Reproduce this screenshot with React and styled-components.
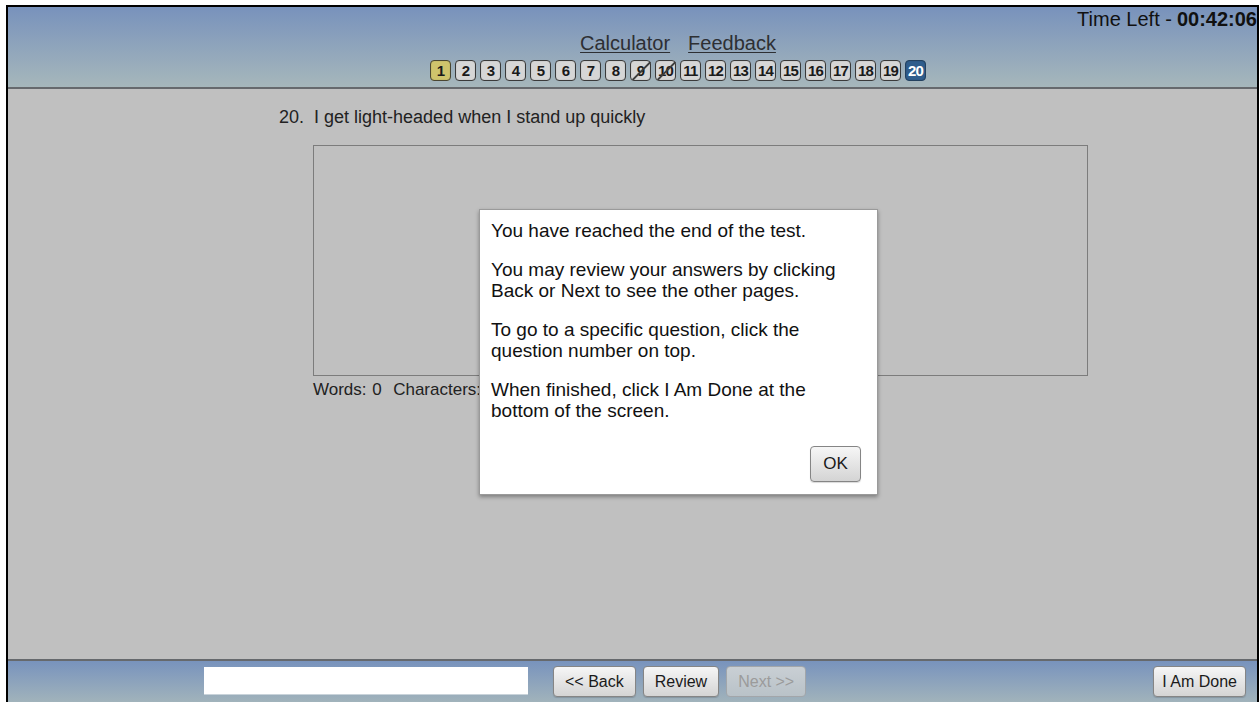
import React from "react";
import styled, { createGlobalStyle, css } from "styled-components";

const GlobalStyle = createGlobalStyle`
  html, body {
    margin: 0;
    padding: 0;
    background: #ffffff;
    overflow: hidden;
  }
  body {
    font-family: "Liberation Sans", Arial, sans-serif;
    color: #1c1c1c;
  }
`;

const Frame = styled.div`
  margin: 5px 1px 0 6px;
  height: 697px;
  border: 2px solid #000;
  border-bottom: none;
  display: flex;
  flex-direction: column;
  position: relative;
  box-sizing: border-box;
`;

const Header = styled.header`
  height: 80px;
  flex: none;
  background: linear-gradient(#7892bc, #a6b7bb);
  border-bottom: 2px solid #66696d;
  display: flex;
  flex-direction: column;
`;

const TimeRow = styled.div`
  display: flex;
  justify-content: flex-end;
  font-size: 20px;
  line-height: 24px;
  height: 23px;
  color: #111;
  b {
    font-weight: bold;
    margin-left: 5px;
  }
`;

const Center = styled.div`
  padding-left: 91px;
  display: flex;
  flex-direction: column;
  align-items: center;
`;

const Links = styled.div`
  display: flex;
  gap: 18px;
  font-size: 20px;
  line-height: 24px;
  margin-top: 1px;
  a {
    color: #2d2f33;
    text-decoration: underline;
    text-underline-offset: 2px;
    text-decoration-thickness: 1px;
  }
`;

const Numbers = styled.div`
  display: flex;
  gap: 4px;
  margin-top: 5px;
`;

const NumBox = styled.span`
  position: relative;
  width: 19px;
  height: 19px;
  border: 1px solid #3a3a3a;
  border-radius: 4px;
  background: #d6d6d6;
  box-shadow: inset 0 0 1px rgba(0, 0, 0, 0.35);
  display: flex;
  align-items: center;
  justify-content: center;
  font-size: 15px;
  font-weight: bold;
  letter-spacing: -0.8px;
  color: #1a1a1a;

  ${(p) =>
    p.$state === "current" &&
    css`
      background: #cfc46c;
      border-color: #4a4632;
    `}

  ${(p) =>
    p.$state === "active" &&
    css`
      background: #2f5d8c;
      border-color: #23415f;
      color: #fff;
    `}

  ${(p) =>
    p.$struck &&
    css`
      &::after {
        content: "";
        position: absolute;
        left: -2px;
        top: 9px;
        width: 25px;
        height: 2px;
        background: #3c3c3c;
        transform: rotate(-45deg);
      }
    `}
`;

const Content = styled.main`
  flex: 1;
  background: #c0c0c0;
  border-bottom: 2px solid #66696d;
  padding: 17px 0 0 271px;
  position: relative;
`;

const Question = styled.div`
  font-size: 18px;
  line-height: 22px;
  color: #222;
  display: flex;
  gap: 10px;
`;

const AnswerBox = styled.div`
  margin: 17px 0 0 34px;
  width: 773px;
  height: 229px;
  border: 1px solid #7c7c7c;
`;

const Counter = styled.div`
  margin: 3px 0 0 34px;
  font-size: 17px;
  line-height: 22px;
  color: #222;
  word-spacing: 1px;
`;

const Footer = styled.footer`
  height: 41px;
  flex: none;
  background: linear-gradient(#7893bd, #a1b3bb);
  display: flex;
  align-items: flex-start;
  padding: 5px 11px 0 196px;
  box-sizing: border-box;
`;

const Blank = styled.div`
  width: 324px;
  height: 27px;
  margin-top: 1px;
  background: #fff;
  border-bottom: 1px solid #c9d3da;
  margin-right: 25px;
`;

const NavGroup = styled.div`
  display: flex;
  gap: 7px;
`;

const Button = styled.button`
  font-family: "Liberation Sans", Arial, sans-serif;
  font-size: 16px;
  height: 31px;
  padding: 0 11px;
  white-space: nowrap;
  border: 1px solid #858585;
  border-radius: 4px;
  background: linear-gradient(#f6f6f6, #d4d4d4);
  color: #1a1a1a;
  box-shadow: 0 1px 1px rgba(0, 0, 0, 0.15);
  cursor: pointer;

  &:disabled {
    color: #9b9b9b;
    border-color: #a2a6aa;
    background: linear-gradient(#c9cfd4, #b9c2c8);
    box-shadow: none;
    cursor: default;
  }
`;

const DoneButton = styled(Button)`
  margin-left: auto;
  padding: 0 8px;
`;

const Dialog = styled.div`
  position: absolute;
  left: 471px;
  top: 202px;
  width: 374px;
  height: 262px;
  padding: 10px 12px 12px 11px;
  background: #fff;
  border: 1px solid #9a9a9a;
  box-shadow: 0 2px 4px rgba(0, 0, 0, 0.35);
  display: flex;
  flex-direction: column;
  font-size: 19px;
  line-height: 21px;
  color: #111;

  p {
    margin: 0 0 18px;
  }
`;

const OkButton = styled(Button)`
  margin-top: auto;
  align-self: flex-end;
  width: 51px;
  height: 36px;
  font-size: 17px;
  padding: 0;
  margin-right: 4px;
`;

const questions = Array.from({ length: 20 }, (_, i) => i + 1);

function stateOf(n) {
  if (n === 1) return "current";
  if (n === 20) return "active";
  return "plain";
}

export default function App() {
  return (
    <>
      <GlobalStyle />
      <Frame>
        <Header>
          <TimeRow>
            Time Left - <b>00:42:06</b>
          </TimeRow>
          <Center>
            <Links>
              <a>Calculator</a>
              <a>Feedback</a>
            </Links>
            <Numbers>
              {questions.map((n) => (
                <NumBox key={n} $state={stateOf(n)} $struck={n === 9 || n === 10}>
                  {n}
                </NumBox>
              ))}
            </Numbers>
          </Center>
        </Header>

        <Content>
          <Question>
            <span>20.</span>
            <span>I get light-headed when I stand up quickly</span>
          </Question>
          <AnswerBox />
          <Counter>Words: 0&nbsp; Characters: 0</Counter>
        </Content>

        <Footer>
          <Blank />
          <NavGroup>
            <Button>&lt;&lt; Back</Button>
            <Button>Review</Button>
            <Button disabled>Next &gt;&gt;</Button>
          </NavGroup>
          <DoneButton>I Am Done</DoneButton>
        </Footer>

        <Dialog>
          <p>You have reached the end of the test.</p>
          <p>
            You may review your answers by clicking Back or Next to see the
            other pages.
          </p>
          <p>To go to a specific question, click the question number on top.</p>
          <p>When finished, click I Am Done at the bottom of the screen.</p>
          <OkButton>OK</OkButton>
        </Dialog>
      </Frame>
    </>
  );
}
